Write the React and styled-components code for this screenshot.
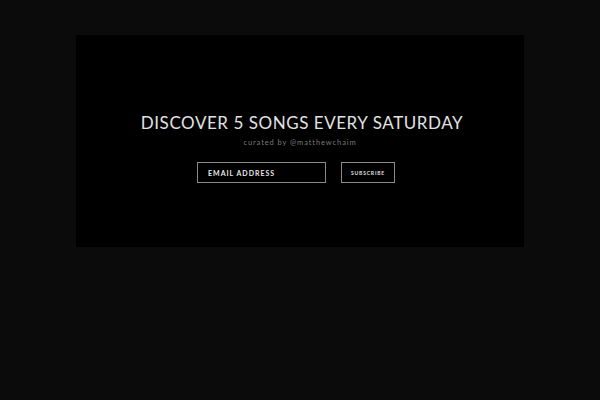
import React from "react";
import styled, { createGlobalStyle } from "styled-components";

const GlobalStyle = createGlobalStyle`
  html, body {
    margin: 0;
    padding: 0;
    background: #0b0b0b;
    font-family: "Lato", "Liberation Sans", sans-serif;
  }
`;

function App() {
  return (
    <>
      <GlobalStyle />
      <Page>
        <Hero>
          <Title>DISCOVER 5 SONGS EVERY SATURDAY</Title>
          <Curated>curated by @matthewchaim</Curated>
          <Form onSubmit={(e) => e.preventDefault()}>
            <EmailInput placeholder="EMAIL ADDRESS" />
            <SubscribeButton type="submit">SUBSCRIBE</SubscribeButton>
          </Form>
        </Hero>
      </Page>
    </>
  );
}

export default App;

const Page = styled.div`
  width: 600px;
  height: 400px;
  padding: 35px 76px 0;
  box-sizing: border-box;
  background: #0b0b0b;
`;

const Hero = styled.div`
  width: 448px;
  height: 212px;
  background: #000;
  display: flex;
  flex-direction: column;
  align-items: center;
  padding-top: 78px;
  box-sizing: border-box;
`;

const Title = styled.h1`
  margin: 0 0 0 4px;
  font-size: 17px;
  font-weight: 400;
  letter-spacing: 0.55px;
  color: #e2e2e2;
  line-height: 20px;
`;

const Curated = styled.p`
  margin: 5px 0 0;
  font-size: 7.5px;
  letter-spacing: 0.9px;
  color: #7a7a7a;
  line-height: 10px;
`;

const Form = styled.form`
  display: flex;
  gap: 15px;
  margin-top: 14px;
  padding-right: 8px;
`;

const EmailInput = styled.input`
  width: 129px;
  height: 21px;
  box-sizing: border-box;
  background: #000;
  border: 1px solid #8a8a8a;
  padding: 0 10px;
  font-family: "Lato", "Liberation Sans", sans-serif;
  font-size: 7px;
  font-weight: 700;
  letter-spacing: 1px;
  color: #fff;
  outline: none;

  &::placeholder {
    color: #e8e8e8;
    opacity: 1;
  }
`;

const SubscribeButton = styled.button`
  width: 54px;
  height: 21px;
  box-sizing: border-box;
  background: #000;
  border: 1px solid #8a8a8a;
  padding: 0;
  font-family: "Lato", "Liberation Sans", sans-serif;
  font-size: 5px;
  font-weight: 700;
  letter-spacing: 0.8px;
  color: #e0e0e0;
  cursor: pointer;
`;
